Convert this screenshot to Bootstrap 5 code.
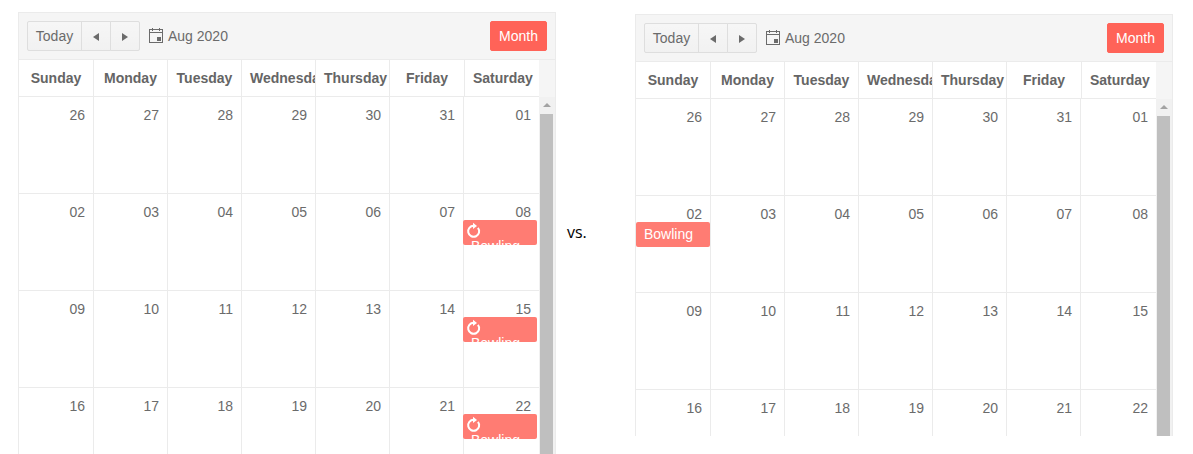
<!DOCTYPE html>
<html lang="en">
<head>
  <meta charset="UTF-8">
  <title>Scheduler comparison</title>
  <link href="https://cdn.jsdelivr.net/npm/bootstrap@5.3.3/dist/css/bootstrap.min.css" rel="stylesheet">
  <style>
    html, body { height: 454px; overflow: hidden; background: #fff; }
    body { font-family: "Liberation Sans", Arial, sans-serif; font-size: 14px; color: #6b6b6b; }
    .cmp-page { padding-left: 18px; }
    .sched { width: 538px; border: 1px solid #ebebeb; border-bottom: 0; flex: none; overflow: hidden; }
    .sched-a { margin-top: 12px; height: 460px; }
    .sched-b { margin-top: 14px; height: 422px; }
    .vs-label { width: 79px; flex: none; padding: 220px 0 0 11px; color: #000; font-family: "Open Sans", sans-serif; font-size: 16px; line-height: 24px; }
    .sched-bar { height: 47px; padding: 8px; background: #f5f5f5; border-bottom: 1px solid #ebebeb; }
    .sched-bar .btn { --bs-btn-padding-x: 8px; --bs-btn-padding-y: 4px; --bs-btn-font-size: 14px; --bs-btn-line-height: 20px; --bs-btn-border-radius: 2px; height: 30px; }
    .tool-btn { --bs-btn-color: #6b6b6b; --bs-btn-bg: #f6f6f6; --bs-btn-border-color: #dedede; --bs-btn-hover-color: #6b6b6b; --bs-btn-hover-bg: #ededed; --bs-btn-hover-border-color: #dedede; width: 30px; padding-left: 0 !important; padding-right: 0 !important; background-image: linear-gradient(rgba(255,255,255,0), rgba(0,0,0,.02)); }
    .tool-btn.today-btn { width: 55px; }
    .month-btn { --bs-btn-color: #fff; --bs-btn-bg: #ff6358; --bs-btn-border-color: #ff6358; --bs-btn-hover-color: #fff; --bs-btn-hover-bg: #f9574b; --bs-btn-hover-border-color: #f9574b; width: 57px; padding-left: 0 !important; padding-right: 0 !important; }
    .arrow-l, .arrow-r { display: inline-block; width: 0; height: 0; border-top: 4px solid transparent; border-bottom: 4px solid transparent; }
    .arrow-l { border-right: 6px solid #6b6b6b; }
    .arrow-r { border-left: 6px solid #6b6b6b; }
    .range-label { margin-left: 9px; gap: 5px; }
    .head-row { height: 37px; background: #f5f5f5; }
    .head-grid, .week-row { display: grid; width: 520px; flex: none; }
    .head-grid { grid-template-columns: 75px 74px 74px 74px 74px 75px 74px; background: #fff; border-bottom: 1px solid #ebebeb; }
    .head-cell { color: #656565; font-weight: 700; line-height: 36px; padding: 0 8px; text-align: center; white-space: nowrap; overflow: hidden; border-right: 1px solid #ebebeb; }
    .head-cell:last-child { border-right: 0; }
    .week-row { grid-template-columns: 75px 74px 74px 74px 74px 74px 75px; height: 97px; border-bottom: 1px solid #ebebeb; }
    .day-cell { position: relative; padding: 8px 8px 0 0; text-align: right; line-height: 20px; border-right: 1px solid #ebebeb; }
    .day-cell:last-child { border-right: 0; }
    .chip { position: absolute; top: 26px; left: 0; width: 74px; height: 25px; background: #ff7c73; color: #fff; text-align: left; border-radius: 2px; overflow: hidden; line-height: 17px; padding: 4px 8px 0; }
    .day-cell:last-child .chip { left: -1px; }
    .chip svg { display: block; margin: 0 0 -1px -4px; overflow: visible; }
    .scroll-track { width: 17px; flex: none; background: #f1f1f1; padding-left: 1px; }
    .scroll-up { height: 17px; padding-top: 6px; }
    .scroll-up i { display: block; width: 0; margin-left: 3px; border: 4px solid transparent; border-top: 0; border-bottom: 4px solid #a3a3a3; }
    .scroll-thumb { width: 13px; height: 500px; background: #bfbfbf; }
  </style>
</head>
<body>
  <div class="cmp-page d-flex align-items-start">
    <div class="sched sched-a" id="schedA"></div>
    <div class="vs-label">vs.</div>
    <div class="sched sched-b" id="schedB"></div>
  </div>

  <script>
    const DAY_NAMES = ["Sunday", "Monday", "Tuesday", "Wednesday", "Thursday", "Friday", "Saturday"];
    const WEEKS = [
      ["26", "27", "28", "29", "30", "31", "01"],
      ["02", "03", "04", "05", "06", "07", "08"],
      ["09", "10", "11", "12", "13", "14", "15"],
      ["16", "17", "18", "19", "20", "21", "22"]
    ];

    const CAL_ICON = `<svg width="14" height="16" viewBox="0 0 14 16" fill="none" stroke="#6b6b6b" stroke-width="1">
      <rect x=".5" y="1.5" width="13" height="13"/><path d="M.5 4.5h13M3.5 0v3M10.5 0v3"/>
      <rect x="8" y="9" width="4" height="4" fill="#6b6b6b" stroke="none"/></svg>`;

    const REPEAT_ICON = `<svg width="15" height="15" viewBox="0 0 15 15" fill="none">
      <path d="M10.9 3.8A5.5 5.5 0 1 1 6.7 1.8" stroke="#fff" stroke-width="2"/>
      <path d="M6 -1.2L10 2 6 5z" fill="#fff"/></svg>`;

    function chipHtml(recurring) {
      if (recurring) return `<div class="chip">${REPEAT_ICON}Bowling</div>`;
      return `<div class="chip">Bowling</div>`;
    }

    function render(target, events) {
      const head = DAY_NAMES.map(d => `<div class="head-cell">${d}</div>`).join("");
      const rows = WEEKS.map(week => {
        const cells = week.map(d => `<div class="day-cell">${d}${events[d] ? chipHtml(events[d] === "repeat") : ""}</div>`).join("");
        return `<div class="week-row">${cells}</div>`;
      }).join("");

      target.innerHTML = `
        <div class="sched-bar d-flex align-items-center">
          <div class="btn-group">
            <button type="button" class="btn tool-btn today-btn">Today</button>
            <button type="button" class="btn tool-btn"><span class="arrow-l"></span></button>
            <button type="button" class="btn tool-btn"><span class="arrow-r"></span></button>
          </div>
          <div class="range-label d-flex align-items-center">${CAL_ICON}<span>Aug 2020</span></div>
          <button type="button" class="btn month-btn ms-auto">Month</button>
        </div>
        <div class="head-row d-flex"><div class="head-grid">${head}</div></div>
        <div class="d-flex">
          <div>${rows}</div>
          <div class="scroll-track"><div class="scroll-up"><i></i></div><div class="scroll-thumb"></div></div>
        </div>`;
    }

    render(document.getElementById("schedA"), { "08": "repeat", "15": "repeat", "22": "repeat" });
    render(document.getElementById("schedB"), { "02": "single" });
  </script>
  <script src="https://cdn.jsdelivr.net/npm/bootstrap@5.3.3/dist/js/bootstrap.bundle.min.js"></script>
</body>
</html>
